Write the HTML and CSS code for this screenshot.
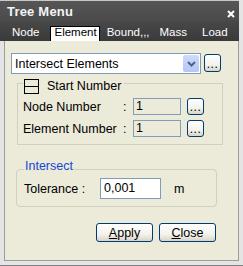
FILE: index.html
```html
<!DOCTYPE html>
<html lang="en">
<head>
  <title>Tree Menu</title>
  <link rel="stylesheet" href="styles.css">
</head>
<body>
  <div class="window">
    <div class="titlebar">
      <span class="title">Tree Menu</span>
      <svg class="close" width="8" height="8" viewBox="0 0 8 8">
        <path d="M1 1 L7 7 M7 1 L1 7" stroke="#ffffff" stroke-width="2" fill="none"/>
      </svg>
    </div>
    <div class="tabs">
      <span class="tab">Node</span>
      <span class="tab active">Element</span>
      <span class="tab">Bound,,,</span>
      <span class="tab">Mass</span>
      <span class="tab last">Load</span>
    </div>
    <div class="panel">
      <div class="select-row">
        <div class="select">
          <span>Intersect Elements</span>
          <span class="arrow">
            <svg width="9" height="6" viewBox="0 0 9 6">
              <path d="M1 1 L4.5 4.5 L8 1" stroke="#4d6185" stroke-width="2" fill="none"/>
            </svg>
          </span>
        </div>
        <button class="dots">...</button>
      </div>

      <div class="group start">
        <div class="group-title">
          <span class="minus"></span>
          <span>Start Number</span>
        </div>
        <div class="fields">
          <span>Node Number</span>
          <span class="colon">:</span>
          <div class="input disabled">1</div>
          <button class="dots small">...</button>
          <span>Element Number</span>
          <span class="colon">:</span>
          <div class="input disabled">1</div>
          <button class="dots small">...</button>
        </div>
      </div>

      <div class="group intersect">
        <div class="group-title blue">Intersect</div>
        <div class="tol-row">
          <span class="tol-label">Tolerance :</span>
          <div class="input white">0,001</div>
          <span class="unit">m</span>
        </div>
      </div>

      <div class="actions">
        <button class="btn"><u>A</u>pply</button>
        <button class="btn"><u>C</u>lose</button>
      </div>
    </div>
  </div>
</body>
</html>
```

FILE: styles.css
```css
* {
  margin: 0;
  padding: 0;
  box-sizing: border-box;
}
body {
  background-color: #e4e4e4;
  font-family: 'Liberation Sans', Arial, sans-serif;
  font-size: 12.5px;
  color: #000000;
}
button {
  font: inherit;
  color: inherit;
}
.window {
  width: 243px;
  height: 266px;
  display: flex;
  flex-direction: column;
  background-color: #e4e4e4;
  border-bottom: 1px solid #808080;
}
.titlebar {
  height: 21px;
  margin-right: 4px;
  padding: 2px 4px 0 7px;
  display: flex;
  justify-content: space-between;
  align-items: flex-start;
  background: linear-gradient(#565656, #4a4a4a);
  border-top: 1px solid #c8c8c8;
}
.title {
  font-size: 13px;
  font-weight: bold;
  line-height: 18px;
  letter-spacing: 0.2px;
  color: #f4f4f4;
}
.close {
  margin-top: 7px;
}
.tabs {
  height: 20px;
  margin-right: 4px;
  padding-left: 7px;
  display: flex;
  align-items: flex-end;
  background: linear-gradient(#484848, #3a3a3a);
}
.tab {
  height: 15px;
  padding: 0 4px;
  font-size: 11.5px;
  line-height: 11px;
  color: #ffffff;
  border: 1px solid transparent;
  border-bottom: none;
}
.tab.active {
  background-color: #ffffff;
  color: #000000;
  border-color: #000000;
  margin: 0 2px 0 5px;
  padding: 0 2px 0 4px;
}
.tab.last {
  margin-left: 5px;
}
.panel {
  flex: 1;
  margin: 0 4px 4px 4px;
  padding: 12px 0 0 6px;
  background-color: #ecead9;
  border: 1px solid #9c9c9c;
  border-top: none;
}
.select-row {
  display: flex;
  gap: 3px;
}
.select {
  width: 190px;
  height: 21px;
  padding-left: 3px;
  display: flex;
  align-items: center;
  background-color: #ffffff;
  border: 1px solid #7f9db9;
}
.arrow {
  margin-left: auto;
  margin-right: 1px;
  width: 16px;
  height: 17px;
  display: flex;
  justify-content: center;
  align-items: center;
  background: linear-gradient(#cddbfc, #b4c6f6);
  border-radius: 2px;
}
.dots {
  width: 17px;
  height: 18px;
  margin-top: 1px;
  display: flex;
  justify-content: center;
  align-items: flex-end;
  padding-bottom: 2px;
  font-size: 12px;
  line-height: 10px;
  letter-spacing: 0.5px;
  background: linear-gradient(#ffffff, #f3f2ec 60%, #d9d4c8);
  border: 1px solid #003c74;
  border-radius: 3px;
}
.dots.small {
  height: 17px;
  margin-top: 0;
  margin-left: 6px;
}
.group {
  border: 1px solid #d0d0bf;
}
.group.start {
  width: 206px;
  margin: 9px 0 0 6px;
  padding: 0 0 7px 5px;
}
.group-title {
  width: fit-content;
  height: 15px;
  margin: -5px 0 0 0;
  padding: 0 3px 0 1px;
  display: flex;
  align-items: center;
  gap: 8px;
  line-height: 15px;
  background-color: #ecead9;
}
.minus {
  width: 15px;
  height: 15px;
  border: 1px solid #000000;
  display: flex;
  align-items: center;
}
.minus::after {
  content: '';
  width: 100%;
  height: 1px;
  background-color: #000000;
}
.fields {
  margin-top: 4px;
  display: grid;
  grid-template-columns: 99px 11px 48px auto;
  row-gap: 5px;
  align-items: center;
}
.colon {
  padding-left: 1px;
}
.input {
  height: 17px;
  padding-left: 2px;
  line-height: 15px;
  border: 1px solid #7f9db9;
}
.input.disabled {
  background-color: #ecead9;
}
.group.intersect {
  width: 201px;
  margin: 24px 0 0 5px;
  padding: 0 0 7px 7px;
  border-radius: 4px;
}
.group-title.blue {
  margin: -11px 0 0 0;
  padding: 0 1px;
  color: #1448d6;
}
.tol-row {
  margin-top: 4px;
  display: flex;
  align-items: center;
}
.tol-label {
  width: 76px;
}
.input.white {
  width: 61px;
  height: 21px;
  padding-left: 3px;
  line-height: 19px;
  background-color: #ffffff;
}
.unit {
  margin-left: 13px;
}
.actions {
  margin-top: 16px;
  padding-right: 22px;
  display: flex;
  justify-content: flex-end;
  gap: 6px;
}
.btn {
  width: 57px;
  height: 19px;
  line-height: 16px;
  background: linear-gradient(#ffffff, #f3f2ec 60%, #d9d4c8);
  border: 1px solid #003c74;
  border-radius: 3px;
}
```
